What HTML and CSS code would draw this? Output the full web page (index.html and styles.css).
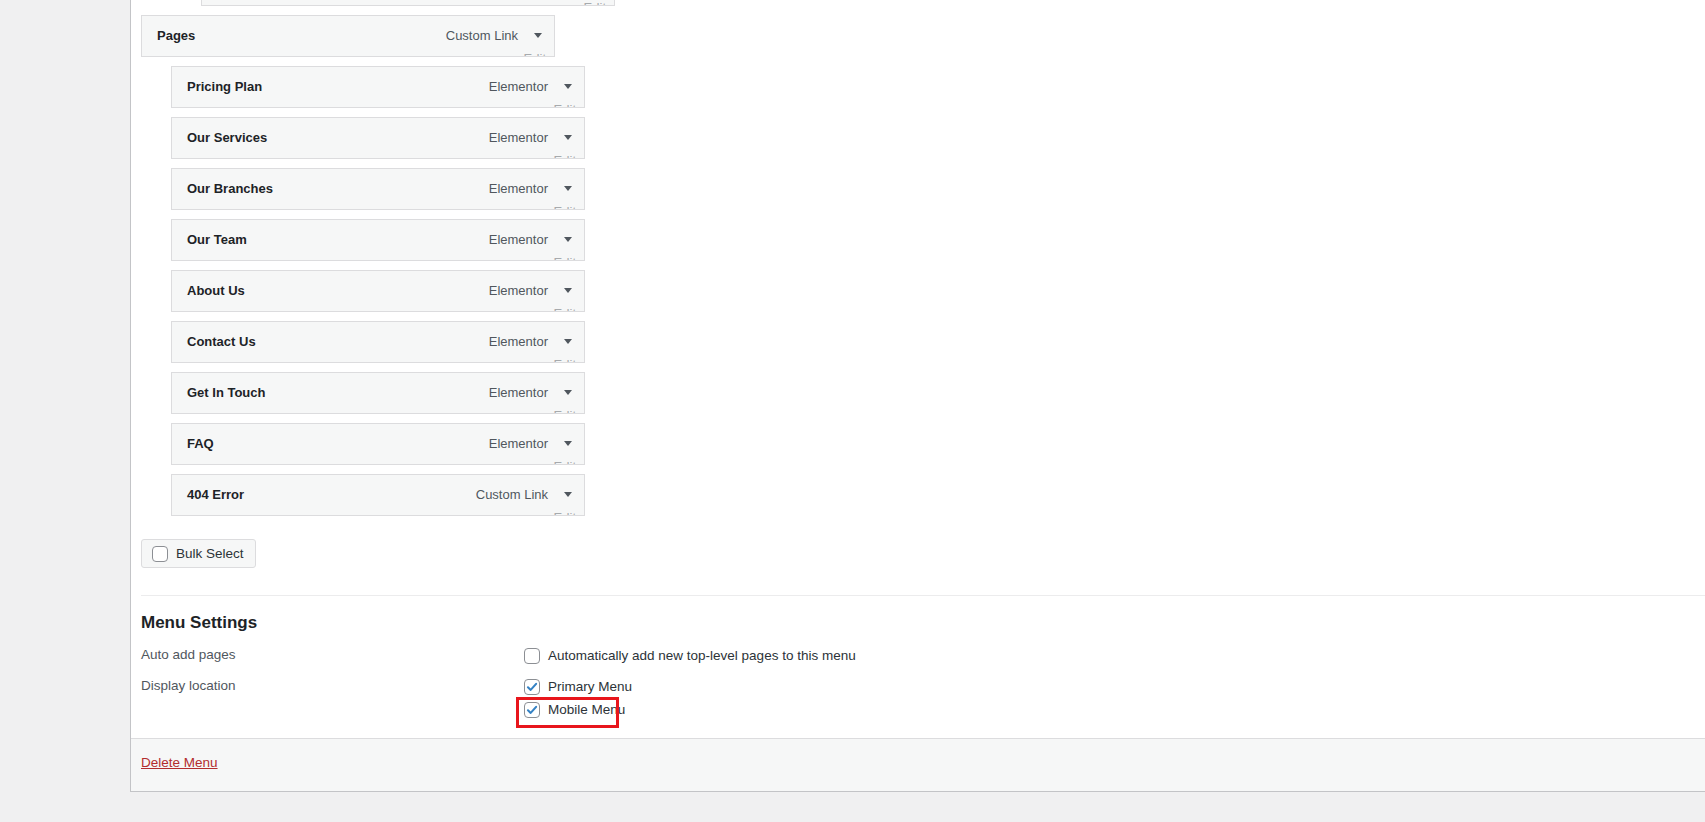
FILE: index.html
```html
<!DOCTYPE html>
<html lang="en">
<head>
    <meta charset="UTF-8">
    <meta name="viewport" content="width=device-width, initial-scale=1.0">
    <title>Menus</title>
    <link rel="stylesheet" href="styles.css">
</head>
<body>

    <div class="menu-panel">
        <div class="menu-body">
            <ul class="menu-items">
                <li class="menu-item depth-2">
                    <span class="item-title">Blog Details</span>
                    <span class="item-controls"><span class="item-type">Custom Link</span><span class="item-arrow"></span></span>
                    <span class="item-edit">Edit</span>
                </li>
                <li class="menu-item">
                    <span class="item-title">Pages</span>
                    <span class="item-controls"><span class="item-type">Custom Link</span><span class="item-arrow"></span></span>
                    <span class="item-edit">Edit</span>
                </li>
                <li class="menu-item depth-1">
                    <span class="item-title">Pricing Plan</span>
                    <span class="item-controls"><span class="item-type">Elementor</span><span class="item-arrow"></span></span>
                    <span class="item-edit">Edit</span>
                </li>
                <li class="menu-item depth-1">
                    <span class="item-title">Our Services</span>
                    <span class="item-controls"><span class="item-type">Elementor</span><span class="item-arrow"></span></span>
                    <span class="item-edit">Edit</span>
                </li>
                <li class="menu-item depth-1">
                    <span class="item-title">Our Branches</span>
                    <span class="item-controls"><span class="item-type">Elementor</span><span class="item-arrow"></span></span>
                    <span class="item-edit">Edit</span>
                </li>
                <li class="menu-item depth-1">
                    <span class="item-title">Our Team</span>
                    <span class="item-controls"><span class="item-type">Elementor</span><span class="item-arrow"></span></span>
                    <span class="item-edit">Edit</span>
                </li>
                <li class="menu-item depth-1">
                    <span class="item-title">About Us</span>
                    <span class="item-controls"><span class="item-type">Elementor</span><span class="item-arrow"></span></span>
                    <span class="item-edit">Edit</span>
                </li>
                <li class="menu-item depth-1">
                    <span class="item-title">Contact Us</span>
                    <span class="item-controls"><span class="item-type">Elementor</span><span class="item-arrow"></span></span>
                    <span class="item-edit">Edit</span>
                </li>
                <li class="menu-item depth-1">
                    <span class="item-title">Get In Touch</span>
                    <span class="item-controls"><span class="item-type">Elementor</span><span class="item-arrow"></span></span>
                    <span class="item-edit">Edit</span>
                </li>
                <li class="menu-item depth-1">
                    <span class="item-title">FAQ</span>
                    <span class="item-controls"><span class="item-type">Elementor</span><span class="item-arrow"></span></span>
                    <span class="item-edit">Edit</span>
                </li>
                <li class="menu-item depth-1">
                    <span class="item-title">404 Error</span>
                    <span class="item-controls"><span class="item-type">Custom Link</span><span class="item-arrow"></span></span>
                    <span class="item-edit">Edit</span>
                </li>
            </ul>

            <div class="bulk-select">
                <button type="button" class="bulk-btn"><span class="cb"></span>Bulk Select</button>
            </div>

            <div class="menu-settings">
                <h3 class="settings-title">Menu Settings</h3>
                <div class="setting-row">
                    <div class="setting-label">Auto add pages</div>
                    <div class="setting-options">
                        <label class="option"><span class="cb"></span>Automatically add new top-level pages to this menu</label>
                    </div>
                </div>
                <div class="setting-row">
                    <div class="setting-label">Display location</div>
                    <div class="setting-options">
                        <label class="option">
                            <span class="cb checked"><svg viewBox="0 0 16 16" width="14" height="14"><path d="M3.4 8.3 L6.5 11.3 L12.7 4.4" fill="none" stroke="#3582c4" stroke-width="2.4" stroke-linecap="round" stroke-linejoin="round"/></svg></span>Primary Menu
                        </label>
                        <label class="option">
                            <span class="cb checked"><svg viewBox="0 0 16 16" width="14" height="14"><path d="M3.4 8.3 L6.5 11.3 L12.7 4.4" fill="none" stroke="#3582c4" stroke-width="2.4" stroke-linecap="round" stroke-linejoin="round"/></svg></span>Mobile Menu
                        </label>
                        <div class="annotation"></div>
                    </div>
                </div>
            </div>
        </div>

        <div class="menu-footer">
            <a href="#" class="delete-link">Delete Menu</a>
        </div>
    </div>

</body>
</html>
```

FILE: styles.css
```css
* {
    box-sizing: border-box;
}

body {
    margin: 0;
    height: 822px;
    overflow: hidden;
    background: #f0f0f1;
    font-family: "Liberation Sans", Arial, sans-serif;
    font-size: 13.5px;
    color: #1d2327;
}

.menu-panel {
    margin-left: 130px;
    background: #fff;
    border-left: 1px solid #c3c4c7;
    border-bottom: 1px solid #c3c4c7;
}

.menu-body {
    padding-left: 10px;
}

/* menu structure list */
.menu-items {
    list-style: none;
    margin: -36px 0 0;
    padding: 0;
}

.menu-item {
    position: relative;
    width: 414px;
    height: 42px;
    margin-bottom: 9px;
    padding: 0 12px 1px 15px;
    display: flex;
    align-items: center;
    justify-content: space-between;
    border: 1px solid #dcdcde;
    background: #f6f7f7;
    overflow: hidden;
}

.depth-1 {
    margin-left: 30px;
}

.depth-2 {
    margin-left: 60px;
}

.item-title {
    font-size: 13px;
    font-weight: bold;
    color: #1d2327;
}

.item-controls {
    display: flex;
    align-items: center;
    gap: 16px;
    font-size: 13px;
    color: #50575e;
}

.item-arrow {
    width: 0;
    height: 0;
    border-left: 4px solid transparent;
    border-right: 4px solid transparent;
    border-top: 5px solid #50575e;
}

.item-edit {
    position: absolute;
    right: 8px;
    top: 36px;
    font-size: 13px;
    line-height: 13px;
    color: #a7aaad;
}

/* checkbox look */
.cb {
    width: 16px;
    height: 16px;
    flex: none;
    display: inline-flex;
    align-items: center;
    justify-content: center;
    border: 1px solid #8c8f94;
    border-radius: 4px;
    background: #fff;
}

.bulk-select {
    margin-top: 23px;
    display: flex;
}

.bulk-btn {
    display: inline-flex;
    align-items: center;
    gap: 8px;
    height: 29px;
    padding: 0 11px 0 10px;
    border: 1px solid #dcdcde;
    border-radius: 3px;
    background: #f6f7f7;
    font-family: inherit;
    font-size: 13.5px;
    color: #2c3338;
}

/* settings */
.menu-settings {
    margin-top: 27px;
    padding: 16px 0 17px;
    border-top: 1px solid #ececed;
}

.settings-title {
    margin: 0;
    font-size: 17px;
    line-height: 22px;
    font-weight: bold;
    color: #1d2327;
}

.setting-row {
    display: flex;
    margin-top: 10px;
}

.setting-row + .setting-row {
    margin-top: 8px;
}

.setting-label {
    width: 383px;
    line-height: 21px;
    color: #50575e;
}

.setting-options {
    position: relative;
    display: flex;
    flex-direction: column;
}

.option {
    display: flex;
    align-items: center;
    gap: 8px;
    height: 23px;
    color: #2c3338;
}

.annotation {
    position: absolute;
    left: -8px;
    top: 22px;
    width: 103px;
    height: 31px;
    border: 3px solid #e8161c;
}

.menu-footer {
    padding: 14px 10px 18px;
    line-height: 20px;
    border-top: 1px solid #dcdcde;
    background: #f6f7f7;
}

.delete-link {
    color: #b32d2e;
    text-decoration: underline;
    font-size: 13.5px;
}
```
